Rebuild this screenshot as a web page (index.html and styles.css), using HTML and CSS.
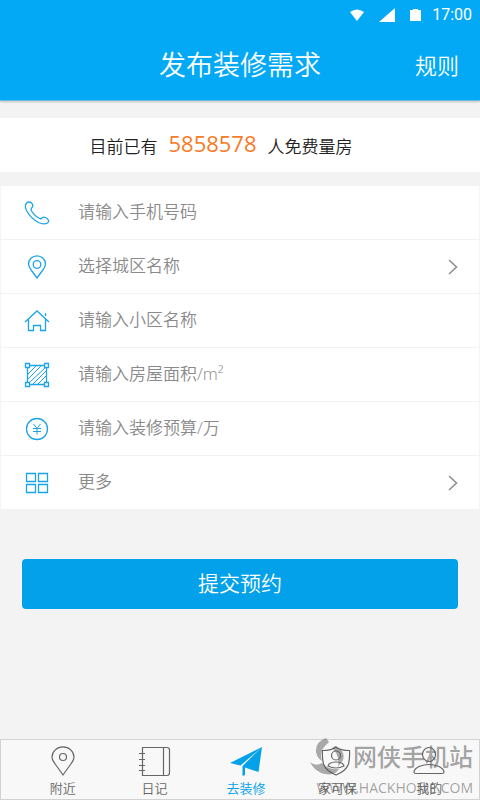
FILE: index.html
```html
<!DOCTYPE html>
<html lang="zh-CN">
<head>
<meta charset="utf-8">
<meta name="viewport" content="width=device-width, initial-scale=1">
<title>发布装修需求</title>
<link rel="stylesheet" href="styles.css">
</head>
<body>
<header class="header">
  <div class="status">
    <svg width="14" height="12" viewBox="0 0 14 12"><path d="M0 3Q7-2 14 3L7 12Z" fill="#fff"/></svg>
    <svg width="16" height="14" viewBox="0 0 16 14"><path d="M16 0V14H0Z" fill="#fff"/></svg>
    <svg width="11" height="12" viewBox="0 0 11 12"><path d="M0 1H3V0H8V1H11V12H0Z" fill="#fff"/></svg>
    <span>17:00</span>
  </div>
  <div class="titlebar">
    <h1 class="title">发布装修需求</h1>
    <a class="rules" href="#rules">规则</a>
  </div>
</header>
<main class="main">
  <p class="counter"><span>目前已有</span><strong class="count">5858578</strong><span>人免费量房</span></p>
  <form class="form">
    <div class="fields">
      <label class="row">
        <svg class="icon" viewBox="0 0 26 26"><path d="M2.500 3.200Q5 .8 7.500 3Q10 5.500 8 7.500Q6.500 9 7.500 11Q10.500 16 15.500 18.500Q17 19.200 18 18Q20 16 23 18.500Q26 21 23.500 23Q20 25 14.500 22.500Q6.500 18 2.500 10.500Q.2 5.700 2.500 3.200Z"/></svg>
        <input class="field" type="tel" aria-label="手机号码" placeholder="请输入手机号码">
      </label>
      <button class="row" type="button">
        <svg class="icon" viewBox="0 0 26 26"><path d="M13 24Q10.500 20.500 7.500 16.500Q4.500 12.700 4.500 10A8.500 8.200 0 0 1 21.500 10Q21.500 12.700 18.500 16.500Q15.500 20.500 13 24Z"/><circle cx="13" cy="10.500" r="3.800"/></svg>
        <span class="field">选择城区名称</span>
        <svg class="chevron" viewBox="0 0 10 16"><path d="M1 1L8.500 8L1 15"/></svg>
      </button>
      <label class="row">
        <svg class="icon" viewBox="0 0 26 26"><path d="M1 14L13 3L25 14M4.500 11V22.500H9.500V17.500H16.500V22.500H21.500V11M21.500 5V8"/></svg>
        <input class="field" type="text" aria-label="小区名称" placeholder="请输入小区名称">
      </label>
      <label class="row">
        <svg class="icon" viewBox="0 0 26 26"><path d="M5.500 3.500H20.500M5.500 22.500H20.500M3.500 6V20M22.500 6V20"/><path class="thin" d="M4 12L12 4M4 17L17 4M6 20L22 5M9 22L22 9M14 22L22 14"/><path class="node" d="M1.500 1.500H5.500V5.500H1.500ZM20.500 1.500H24.500V5.500H20.500ZM1.500 20.500H5.500V24.500H1.500ZM20.500 20.500H24.500V24.500H20.500Z"/></svg>
        <input class="field" type="text" aria-label="房屋面积" placeholder="请输入房屋面积/m²">
      </label>
      <label class="row">
        <svg class="icon" viewBox="0 0 26 26"><circle cx="13" cy="13" r="10.500"/><path class="thin" d="M9.500 8L13 12.500L16.500 8M13 12.500V18.500M9 12.500H17M9 15.500H17"/></svg>
        <input class="field" type="text" aria-label="装修预算" placeholder="请输入装修预算/万">
      </label>
      <button class="row" type="button">
        <svg class="icon" viewBox="0 0 26 26"><path d="M2.500 3.500H11.500V11.500H2.500ZM14.500 3.500H23.500V11.500H14.500ZM2.500 14.500H11.500V22.500H2.500ZM14.500 14.500H23.500V22.500H14.500Z"/></svg>
        <span class="field">更多</span>
        <svg class="chevron" viewBox="0 0 10 16"><path d="M1 1L8.500 8L1 15"/></svg>
      </button>
    </div>
    <button class="submit" type="submit">提交预约</button>
  </form>
</main>
<nav class="tabs">
  <a class="tab" href="#near">
    <svg viewBox="0 0 34 32"><path d="M17 30Q13.500 25 9.500 19.500Q6 14.800 6 12.300A11 10.500 0 0 1 28 12.300Q28 14.800 24.500 19.500Q20.500 25 17 30Z"/><circle cx="17" cy="12" r="3.500"/></svg>
    <span>附近</span>
  </a>
  <a class="tab" href="#diary">
    <svg viewBox="0 0 34 32"><path d="M5.500 2.500H30Q32.500 2.500 32.500 5V27.500Q32.500 30.500 30 30.500H5.500ZM26.500 2.500V30.500M2 8.500H8M2 14.500H8M2 20.500H8M2 25.500H8"/></svg>
    <span>日记</span>
  </a>
  <a class="tab tab-active" href="#decorate" aria-current="page">
    <svg viewBox="0 0 34 32"><path d="M33 2L1 18L11.500 20.500ZM33 2L13.500 21V31L16 30V22.500L29.500 27Z"/></svg>
    <span>去装修</span>
  </a>
  <a class="tab" href="#warranty">
    <svg viewBox="0 0 34 32"><path d="M15 2Q19 5.500 28.500 5.500Q29 13 27.500 19Q25 26 15 30Q5 26 2.500 19Q1 13 1.500 5.500Q11 5.500 15 2Z"/><circle cx="15" cy="10.500" r="4.500"/><path d="M7 21Q8 17 15 17Q22 17 23 21Q19 23 15 23Q11 23 7 21Z"/></svg>
    <span>家可保</span>
  </a>
  <a class="tab" href="#mine">
    <svg viewBox="0 0 34 32"><ellipse cx="17" cy="9.500" rx="6.500" ry="7"/><path d="M2 27Q2 24 7 21.500Q17 17.500 27 21.500Q32 24 32 27Q32 28.500 30 28.500H4Q2 28.500 2 27Z"/></svg>
    <span>我的</span>
  </a>
  <div class="watermark">
    <div class="mark-name">
      <svg class="mark" width="43" height="38" viewBox="0 0 43 38"><path d="M16 0Q5 4 6 14Q7 20 12 23Q9 14 15 8L19 4ZM0 24Q6 29 12 25Q18 32 29 31Q25 38 15 36Q5 34 0 24ZM25 8Q36 13 33 22L28 29Q30 17 22 10Z"/></svg>
      <span>网侠手机站</span>
    </div>
    <div class="mark-url">WWW.HACKHOME.COM</div>
  </div>
</nav>
</body>
</html>
```
FILE: styles.css
```css
* {
  box-sizing: border-box;
}

body {
  margin: 0;
  min-height: 100vh;
  display: flex;
  flex-direction: column;
  background: #f3f3f3;
  color: #222;
  font-family: "Open Sans", "Noto Sans CJK SC", sans-serif;
  font-weight: 350;
}

button,
input {
  font: inherit;
}

.header {
  background: #03a9f5;
  color: #fff;
  border-bottom: 1px solid #6cbce8;
  box-shadow: 0 1px 2px rgba(0, 0, 0, 0.2);
}

.status {
  height: 30px;
  padding-right: 8px;
  display: flex;
  align-items: center;
  justify-content: flex-end;
  gap: 15px;
  font: 400 16px/30px Roboto, sans-serif;
}

.status span {
  margin-left: -4px;
}

.titlebar {
  height: 70px;
  padding: 0 21px;
  display: grid;
  grid-template-columns: 1fr auto 1fr;
  align-items: center;
}

.title {
  grid-column: 2;
  margin: 0;
  font-size: 27px;
  font-weight: 350;
  line-height: 40px;
}

.rules {
  justify-self: end;
  color: inherit;
  font-size: 22px;
  line-height: 40px;
  text-decoration: none;
}

.main {
  flex: 1;
}

.counter {
  height: 54px;
  margin: 17px 0 14px;
  padding-right: 38px;
  display: flex;
  align-items: center;
  justify-content: center;
  gap: 11px;
  background: #fff;
  font-size: 17px;
}

.count {
  color: #f57c28;
  font-size: 22px;
  font-weight: 400;
  line-height: 32px;
  padding-bottom: 4px;
}

.fields {
  background: #fff;
  border: solid #f4f4f4;
  border-width: 0 1px;
}

.row {
  width: 100%;
  height: 54px;
  padding: 0 21px 0 23px;
  display: flex;
  align-items: center;
  gap: 28px;
  background: none;
  border: 0;
  border-bottom: 1px solid #f2f2f2;
  text-align: left;
}

.icon {
  width: 26px;
  height: 26px;
  flex: none;
  fill: none;
  stroke: #1ba5e8;
  stroke-width: 1.3;
}

.thin {
  stroke-width: 1;
}

.node {
  fill: #fff;
}

.field {
  flex: 1;
  min-width: 0;
  padding: 0 0 2px;
  border: 0;
  outline: 0;
  background: none;
  color: #8a8a8a;
  font-size: 17px;
  line-height: 26px;
}

.field::placeholder {
  color: #8a8a8a;
  opacity: 1;
}

.chevron {
  width: 10px;
  height: 16px;
  flex: none;
  fill: none;
  stroke: #8c8c8c;
  stroke-width: 1.5;
}

.submit {
  display: block;
  width: calc(100% - 44px);
  height: 50px;
  margin: 49px 22px;
  padding: 0 0 4px;
  border: 0;
  border-radius: 4px;
  background: #03a1e9;
  color: #fff;
  font-size: 21px;
}

.tabs {
  position: relative;
  height: 61px;
  padding: 5px 4px 0 16px;
  display: grid;
  grid-template-columns: repeat(5, 1fr);
  border: 1px solid #d2d2d2;
  background: #f8f8f8;
}

.tab {
  display: flex;
  flex-direction: column;
  align-items: center;
  color: #666;
  font-size: 13px;
  line-height: 22px;
  text-decoration: none;
}

.tab svg {
  width: 34px;
  height: 32px;
  fill: none;
  stroke: #666;
  stroke-width: 1.2;
}

.tab-active {
  color: #03a1e9;
}

.tab-active svg {
  fill: #03a1e9;
  stroke: none;
}

.watermark {
  position: absolute;
  right: 6px;
  bottom: 1px;
  color: rgba(90, 90, 90, 0.55);
  pointer-events: none;
}

.mark-name {
  height: 40px;
  display: flex;
  justify-content: flex-end;
  font-size: 24px;
  font-weight: 500;
  line-height: 38px;
}

.mark {
  fill: rgba(90, 90, 90, 0.5);
}

.mark-url {
  font-size: 14px;
  font-weight: 400;
  line-height: 20px;
  text-align: right;
}
```
